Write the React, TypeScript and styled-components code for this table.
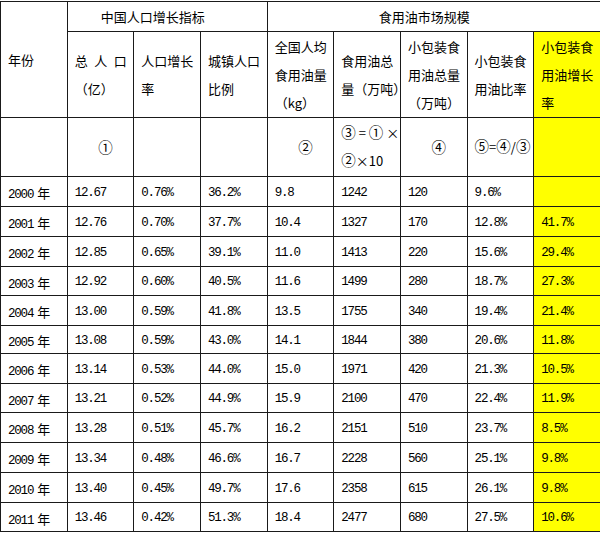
import React from 'react';
import styled, { createGlobalStyle } from 'styled-components';

const GlobalStyle = createGlobalStyle`
  html, body {
    margin: 0;
    padding: 0;
    overflow: hidden;
    background: #fff;
  }
  body {
    font-family: 'Noto Sans CJK SC', 'Noto Sans', sans-serif;
    color: #000;
  }
`;

// year, total pop, growth, urban, per capita, total oil, small pack, ratio, small pack growth
const data = [
  ['2000', '12.67', '0.76%', '36.2%', '9.8', '1242', '120', '9.6%', ''],
  ['2001', '12.76', '0.70%', '37.7%', '10.4', '1327', '170', '12.8%', '41.7%'],
  ['2002', '12.85', '0.65%', '39.1%', '11.0', '1413', '220', '15.6%', '29.4%'],
  ['2003', '12.92', '0.60%', '40.5%', '11.6', '1499', '280', '18.7%', '27.3%'],
  ['2004', '13.00', '0.59%', '41.8%', '13.5', '1755', '340', '19.4%', '21.4%'],
  ['2005', '13.08', '0.59%', '43.0%', '14.1', '1844', '380', '20.6%', '11.8%'],
  ['2006', '13.14', '0.53%', '44.0%', '15.0', '1971', '420', '21.3%', '10.5%'],
  ['2007', '13.21', '0.52%', '44.9%', '15.9', '2100', '470', '22.4%', '11.9%'],
  ['2008', '13.28', '0.51%', '45.7%', '16.2', '2151', '510', '23.7%', '8.5%'],
  ['2009', '13.34', '0.48%', '46.6%', '16.7', '2228', '560', '25.1%', '9.8%'],
  ['2010', '13.40', '0.45%', '49.7%', '17.6', '2358', '615', '26.1%', '9.8%'],
  ['2011', '13.46', '0.42%', '51.3%', '18.4', '2477', '680', '27.5%', '10.6%'],
];

// row heights read off the sheet
const rowHeights = [30, 30, 30, 29, 30, 28, 30, 29, 30, 30, 30, 29];

const App = () => {
  return (
    <>
      <GlobalStyle />
      <Sheet>
        <colgroup>
          {Array.from({ length: 9 }).map((_, i) => (
            <col key={i} />
          ))}
        </colgroup>
        <tbody>
          <Row $h={30}>
            <Cell rowSpan={2}>年份</Cell>
            <Cell colSpan={3} $indent={33}>
              中国人口增长指标
            </Cell>
            <Cell colSpan={5} $indent={111}>
              食用油市场规模
            </Cell>
          </Row>
          <Row $h={86}>
            <HeadCell>
              <Line>总&#8194;人&#8194;口</Line>
              <Line>（亿）</Line>
            </HeadCell>
            <HeadCell>
              <Line>人口增长</Line>
              <Line>率</Line>
            </HeadCell>
            <HeadCell>
              <Line>城镇人口</Line>
              <Line>比例</Line>
            </HeadCell>
            <HeadCell>
              <Line>全国人均</Line>
              <Line>食用油量</Line>
              <Line>（kg）</Line>
            </HeadCell>
            <HeadCell>
              <Line>食用油总</Line>
              <Line>量（万吨）</Line>
            </HeadCell>
            <HeadCell>
              <Line>小包装食</Line>
              <Line>用油总量</Line>
              <Line>（万吨）</Line>
            </HeadCell>
            <HeadCell>
              <Line>小包装食</Line>
              <Line>用油比率</Line>
            </HeadCell>
            <HeadCell $yellow>
              <Line>小包装食</Line>
              <Line>用油增长</Line>
              <Line>率</Line>
            </HeadCell>
          </Row>
          <Row $h={59}>
            <Cell />
            <Mark>
              <Circ>①</Circ>
            </Mark>
            <Cell />
            <Cell />
            <Mark>
              <Circ>②</Circ>
            </Mark>
            <HeadCell>
              <Line>
                <Circ>③</Circ> = <Circ>①</Circ> ×
              </Line>
              <Line>
                <Circ>②</Circ>×10
              </Line>
            </HeadCell>
            <Mark>
              <Circ>④</Circ>
            </Mark>
            <HeadCell>
              <Line>
                <Circ>⑤</Circ>=<Circ>④</Circ>/<Circ>③</Circ>
              </Line>
            </HeadCell>
            <Cell $yellow />
          </Row>
          {data.map((r, ri) => (
            <Row key={r[0]} $h={rowHeights[ri]}>
              <NumCell>
                {r[0]}
                <Nian>年</Nian>
              </NumCell>
              {r.slice(1).map((v, i) => (
                <NumCell key={i} $yellow={i === 7}>
                  {v}
                </NumCell>
              ))}
            </Row>
          ))}
        </tbody>
      </Sheet>
    </>
  );
};

export default App;

const Sheet = styled.table`
  margin-top: 1px;
  width: 601px;
  table-layout: fixed;
  border-collapse: collapse;
  font-size: 13px;
`;

const Row = styled.tr<{ $h: number }>`
  height: ${(p) => p.$h}px;
`;

const Cell = styled.td<{ $yellow?: boolean; $indent?: number }>`
  border: 1px solid #1a1a1a;
  padding: 0 0 0 ${(p) => p.$indent ?? 7}px;
  vertical-align: middle;
  text-align: left;
  white-space: nowrap;
  overflow: visible;
  background: ${(p) => (p.$yellow ? '#ffff00' : '#fff')};
`;

const HeadCell = styled(Cell)`
  line-height: 28px;
`;

const Line = styled.div`
  white-space: nowrap;
`;

const Mark = styled(Cell)`
  text-align: center;
  padding-left: 10px;
`;

const Circ = styled.span`
  font-size: 14.5px;
  line-height: 1;
`;

const NumCell = styled(Cell)`
  font-family: 'Liberation Mono', 'Noto Sans CJK SC', monospace;
  font-size: 12.5px;
  letter-spacing: -1.2px;
  padding-top: 2px;
`;

const Nian = styled.span`
  font-family: 'Noto Sans CJK SC', sans-serif;
  font-size: 13px;
  letter-spacing: 0;
  margin-left: 4px;
`;
